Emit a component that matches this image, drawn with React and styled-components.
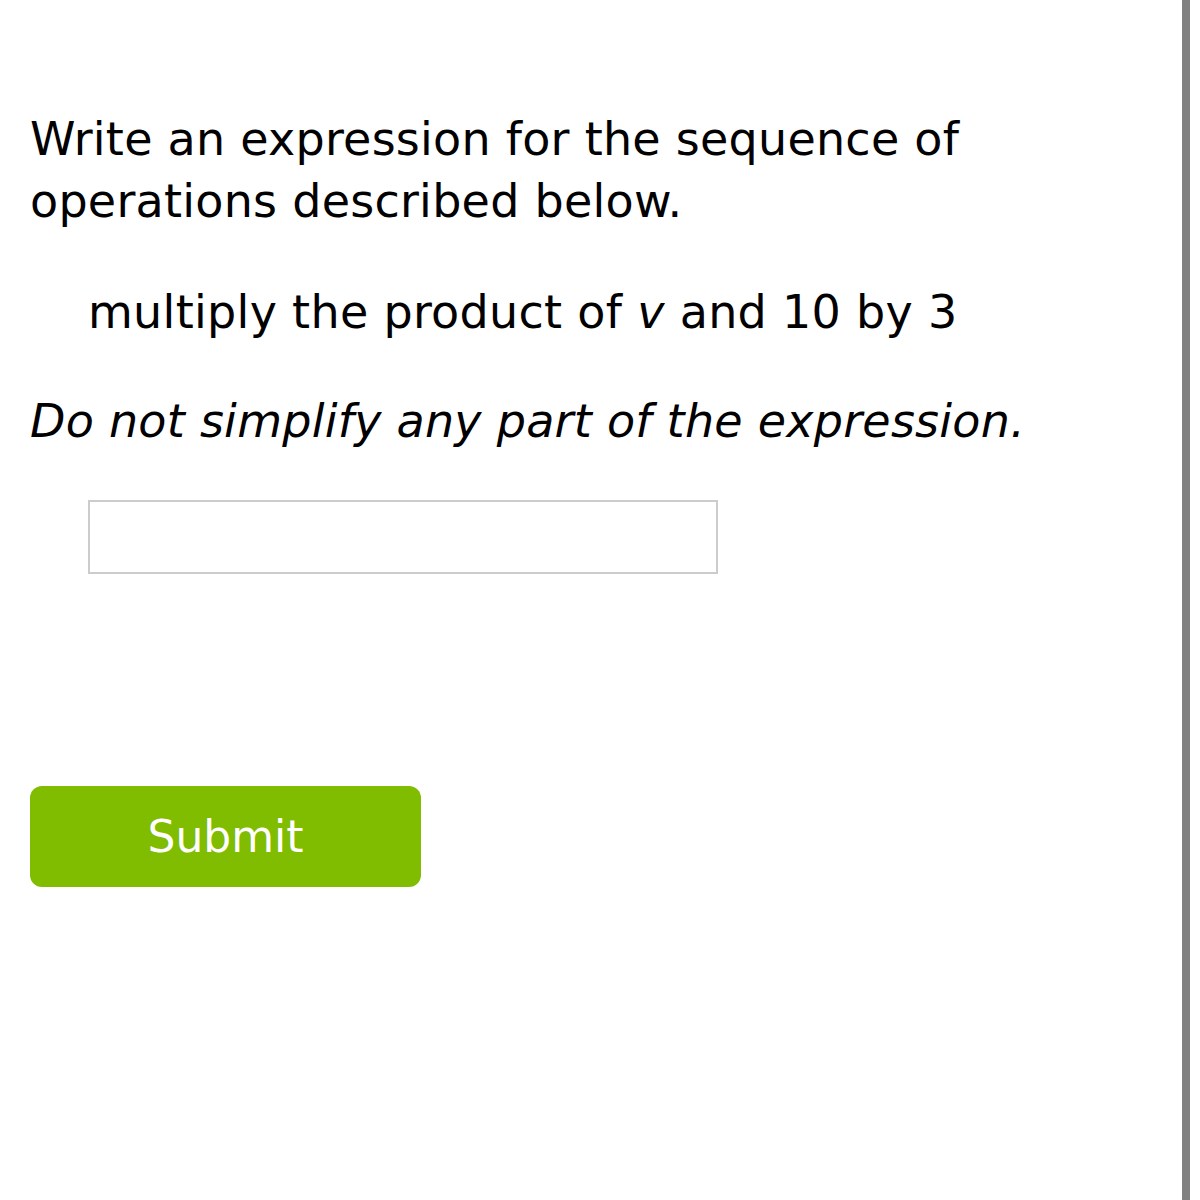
import React from 'react';
import styled, { createGlobalStyle } from 'styled-components';

const GlobalStyle = createGlobalStyle`
  html, body {
    margin: 0;
    padding: 0;
    background: #ffffff;
  }
`;

const Page = styled.div`
  display: flex;
  width: 1200px;
  height: 1200px;
  background: #ffffff;
  font-family: "DejaVu Sans", Verdana, sans-serif;
  color: #000000;
`;

const Content = styled.main`
  flex: 1;
  padding: 108px 0 0 30px;
`;

const ScrollBar = styled.div`
  width: 8px;
  margin-right: 10px;
  background: #808080;
`;

const Prompt = styled.p`
  margin: 0;
  font-size: 46px;
  line-height: 62px;
  letter-spacing: 0.25px;
  font-style: ${(p) => (p.italic ? 'italic' : 'normal')};
`;

const Operation = styled.p`
  margin: 49px 0 47px 58px;
  font-size: 46px;
  line-height: 62px;
  letter-spacing: 0.3px;

  i {
    font-style: italic;
  }
`;

const AnswerBox = styled.input`
  display: block;
  box-sizing: border-box;
  width: 630px;
  height: 74px;
  margin: 48px 0 0 58px;
  border: 2px solid #cccccc;
  outline: none;
  background: #ffffff;
`;

const SubmitButton = styled.button`
  display: block;
  box-sizing: border-box;
  width: 391px;
  height: 101px;
  margin-top: 212px;
  border: none;
  border-radius: 12px;
  background: #80bc00;
  color: #ffffff;
  font-family: "DejaVu Sans", Verdana, sans-serif;
  font-size: 44px;
  cursor: pointer;
`;

const App = () => {
  return (
    <>
      <GlobalStyle />
      <Page>
        <Content>
          <Prompt>
            Write an expression for the sequence of
            <br />
            operations described below.
          </Prompt>
          <Operation>
            multiply the product of <i>v</i> and 10 by 3
          </Operation>
          <Prompt italic>Do not simplify any part of the expression.</Prompt>
          <AnswerBox type="text" aria-label="answer" />
          <SubmitButton>Submit</SubmitButton>
        </Content>
        <ScrollBar />
      </Page>
    </>
  );
};

export default App;
